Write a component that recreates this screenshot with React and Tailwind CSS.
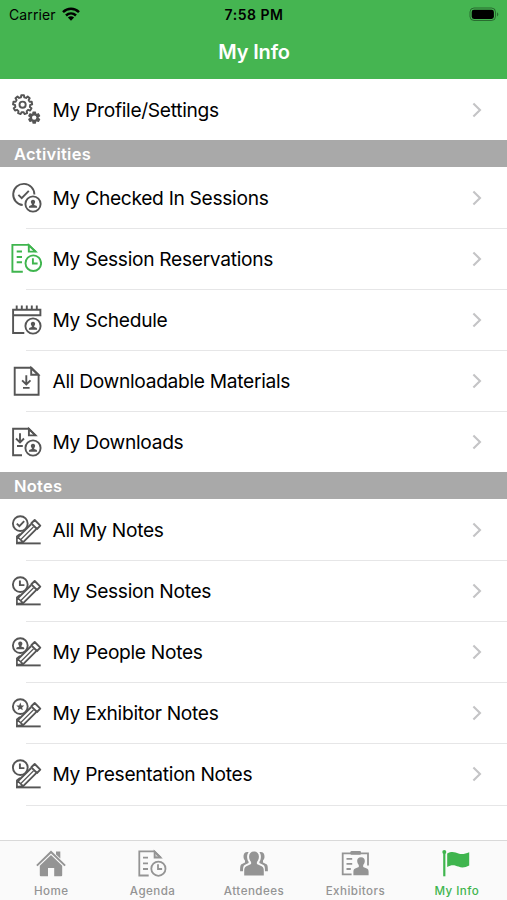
import React from "react";

const gearPath = (cx, cy, outer, inner, teeth) => {
  const pts = [];
  const step = (Math.PI * 2) / teeth;
  for (let i = 0; i < teeth; i++) {
    const a = i * step - Math.PI / 2;
    [[-0.31, inner], [-0.2, outer], [0.2, outer], [0.31, inner]].forEach(([f, r]) => {
      pts.push(`${(cx + r * Math.cos(a + f * step)).toFixed(2)} ${(cy + r * Math.sin(a + f * step)).toFixed(2)}`);
    });
  }
  return `M${pts.join("L")}Z`;
};

function Icon({ children, green }) {
  return (
    <svg
      viewBox="0 0 32 32"
      fill="none"
      stroke="currentColor"
      strokeWidth="1.9"
      className={`h-8 w-8 shrink-0 ${green ? "text-[#3fb54e]" : "text-[#555]"}`}
    >
      {children}
    </svg>
  );
}

function Bust({ x, y, s = 1 }) {
  return (
    <path
      transform={`translate(${x} ${y}) scale(${s})`}
      d="M0-4.4C1.5-4.4 2.3-3.4 2.2-2C2.1-1 1.6-.3 1.2.1V1.1L3.4 1.7C4 2 4.2 2.5 4.2 3.8H-4.2C-4.2 2.5-4 2-3.4 1.7L-1.2 1.1V.1C-1.6-.3-2.1-1-2.2-2C-2.3-3.4-1.5-4.4 0-4.4Z"
      fill="currentColor"
      stroke="none"
    />
  );
}

function PersonBadge({ y = 22 }) {
  return (
    <>
      <circle cx="23" cy={y} r="7.6" />
      <Bust x={23} y={y} s={0.98} />
    </>
  );
}

function Gears() {
  return (
    <Icon>
      <path d={gearPath(12.6, 10.7, 9.6, 7.6, 9)} strokeWidth="1.9" strokeLinejoin="round" />
      <circle cx="12.6" cy="10.7" r="3.1" strokeWidth="1.9" />
      <path d={gearPath(24.2, 23.6, 5.6, 3.9, 6)} strokeWidth="1.4" strokeLinejoin="round" fill="currentColor" />
      <circle cx="24.2" cy="23.6" r="2.2" fill="white" stroke="none" />
    </Icon>
  );
}

function CheckedIn() {
  return (
    <Icon>
      <path d="M12.7 23A10.6 10.6 0 1 1 24.4 12.5" />
      <path d="M8.4 12.8L11.7 16.2L18.8 8.8" />
      <PersonBadge />
    </Icon>
  );
}

function Reservations() {
  return (
    <Icon green>
      <path d="M12.8 28.7H2.4V1.9H18.6L25.8 8.9" />
      <path d="M18.8 2.2V8.6H25.6Z" />
      <path d="M6.7 8.5H12M6.7 14H12M6.7 19.3H12" />
      <circle cx="23.3" cy="20.2" r="7.8" />
      <path d="M22.9 15.2V20.5H27.6" />
    </Icon>
  );
}

function Schedule() {
  return (
    <Icon>
      <path d="M14.3 29H3.1V5.7H30.4V11.2H3.1" />
      <path d="M6.7 1.6V5.5M11.8 1.6V5.5M16.8 1.6V5.5M21.8 1.6V5.5M26.8 1.6V5.5" />
      <PersonBadge />
    </Icon>
  );
}

function Materials() {
  return (
    <Icon>
      <path d="M4.7 2.7H21.3L28.6 9.9V29.7H4.7Z" />
      <path d="M21.2 3V9.8H28.2Z" />
      <path d="M16.3 10.2V19M12.1 15.4L16.3 19.4L20.5 15.4M13 22.9H19.6" />
    </Icon>
  );
}

function Downloads() {
  return (
    <Icon>
      <path d="M12 29.3H3.1V2.7H18.8L25.7 9.6" />
      <path d="M18.9 3V9.4H25.5Z" />
      <path d="M10 7.2V16M6 12.5L10 16.4L14 12.5M7 20H12.8" />
      <PersonBadge />
    </Icon>
  );
}

function NoteIcon({ kind }) {
  return (
    <Icon>
      <circle cx="10.3" cy="9.6" r="7.4" />
      {kind === "check" && <path d="M6.8 9.6L9.4 12.2L14.2 7.2" />}
      {kind === "clock" && <path d="M9.9 5.4V10.1H14.4" />}
      {kind === "person" && <Bust x={10.3} y={9.6} s={0.96} />}
      {kind === "star" && (
        <path
          d="M10.3 5.6L11.4 8.4L14.3 8.6L12.1 10.5L12.8 13.3L10.3 11.8L7.8 13.3L8.5 10.5L6.3 8.6L9.2 8.4Z"
          fill="currentColor"
          stroke="none"
        />
      )}
      <path d="M24.7 6L30.3 11.7L27 15L21.3 9.3Z" strokeLinejoin="round" />
      <path d="M21 10.2L7.8 23.2M26.2 15.2L13.2 28.2" />
      <path d="M23.6 12.8L10.6 25.7" strokeWidth="1.2" />
      <path d="M10 19.8L6.9 22.3V28.8L13.2 28.2L7.6 23" strokeWidth="1.7" strokeLinejoin="round" />
      <path d="M6 29.4H30.7" />
    </Icon>
  );
}

function Row({ icon, label, last }) {
  return (
    <div className="relative flex h-[61.05px] shrink-0 items-center pl-[10px] pr-[25px]">
      {icon}
      <span className="ml-[10.5px] flex-1 whitespace-nowrap text-[19.2px] leading-6 tracking-[-0.31px] text-black">{label}</span>
      <svg viewBox="0 0 10 16" className="h-4 w-[10px]" fill="none" stroke="#c4c4c6" strokeWidth="2.1">
        <path d="M1.4 1.4L8 8L1.4 14.6" />
      </svg>
      {!last && <div className="absolute -bottom-px left-[26px] right-0 h-px bg-[#e6e6e7]" />}
    </div>
  );
}

function Section({ title }) {
  return (
    <div className="flex h-[27px] shrink-0 items-center bg-[#a9a9a9] pl-[14px] pt-px font-semibold text-white">
      <span className="text-[16.5px] tracking-[0.25px]">{title}</span>
    </div>
  );
}

function Tab({ label, active, children }) {
  return (
    <div className={`flex flex-1 flex-col items-center ${active ? "text-[#3fb54e]" : "text-[#949494]"}`}>
      <svg viewBox="0 0 32 30" className="mt-[8px] h-[30px] w-8" fill="none" stroke="currentColor" strokeWidth="1.8">
        {children}
      </svg>
      <span className="mt-[5px] whitespace-nowrap pl-px text-[11.6px] font-medium leading-[15px] tracking-[0.45px]">{label}</span>
    </div>
  );
}

export default function App() {
  return (
    <div className="flex h-[900px] w-[507px] flex-col overflow-hidden bg-white font-['Inter','Liberation_Sans',sans-serif]">
      <header className="flex h-[79px] shrink-0 flex-col bg-[#45b551] text-black">
        <div className="grid h-7 grid-cols-3 items-center pl-[9px] pr-[8px] text-[14px]">
          <div className="flex items-center gap-[6px]">
            <span className="tracking-[0.1px]">Carrier</span>
            <svg viewBox="0 0 18 14" className="h-[14px] w-[18px]" fill="none" stroke="black" strokeWidth="2.5">
              <path d="M1 5.1C5.6.6 12.4.6 17 5.1" />
              <path d="M4 8.5C6.9 5.7 11.1 5.7 14 8.5" />
              <path d="M9 13.8L5.9 10.6C7.7 8.9 10.3 8.9 12.1 10.6Z" fill="black" stroke="none" />
            </svg>
          </div>
          <span className="text-center text-[14px] font-semibold tracking-[0.5px]">7:58 PM</span>
          <svg viewBox="0 0 30 15" className="h-[15px] w-[30px] justify-self-end" fill="none">
            <rect x="1" y="1" width="25.5" height="12.5" rx="4" stroke="#000" strokeOpacity=".4" />
            <rect x="2.7" y="2.7" width="22.2" height="9.2" rx="2.3" fill="black" />
            <path d="M28 5.2C29.8 6 29.8 8.6 28 9.4Z" fill="black" fillOpacity=".4" />
          </svg>
        </div>
        <h1 className="mt-[12px] pl-px text-center text-[20px] font-semibold leading-6 tracking-[-0.15px] text-white">My Info</h1>
      </header>

      <main className="flex flex-1 flex-col">
        <Row icon={<Gears />} label="My Profile/Settings" last />
        <Section title="Activities" />
        <Row icon={<CheckedIn />} label="My Checked In Sessions" />
        <Row icon={<Reservations />} label="My Session Reservations" />
        <Row icon={<Schedule />} label="My Schedule" />
        <Row icon={<Materials />} label="All Downloadable Materials" />
        <Row icon={<Downloads />} label="My Downloads" last />
        <Section title="Notes" />
        <Row icon={<NoteIcon kind="check" />} label="All My Notes" />
        <Row icon={<NoteIcon kind="clock" />} label="My Session Notes" />
        <Row icon={<NoteIcon kind="person" />} label="My People Notes" />
        <Row icon={<NoteIcon kind="star" />} label="My Exhibitor Notes" />
        <Row icon={<NoteIcon kind="clock" />} label="My Presentation Notes" />
      </main>

      <nav className="flex h-[60px] shrink-0 border-t border-[#d9d9d9] bg-[#fafafa]">
        <Tab label="Home">
          <path d="M1.9 16.6L16 3L30.1 16.6" strokeWidth="2" />
          <path d="M21 2.5H25.3V9.5L21 5.4Z" fill="currentColor" stroke="none" />
          <path d="M16 6L27.2 16.7V26.3Q27.2 27.3 26.2 27.3H19.2V19H13V27.3H5.8Q4.8 27.3 4.8 26.3V16.7Z" fill="currentColor" stroke="none" />
        </Tab>
        <Tab label="Agenda">
          <path d="M12.7 26.5H3.3V2.3H18.4L24.8 8.7" />
          <path d="M18.6 2.6V8.5H24.6Z" fill="currentColor" fillOpacity=".4" />
          <path d="M7 8.7H12M7 14.4H12M7 20H12" />
          <circle cx="22.4" cy="19.7" r="7.1" />
          <path d="M22 15.3V20H26.1" />
        </Tab>
        <Tab label="Attendees">
          <g fill="currentColor" stroke="none">
            <path d="M10.6 3.2C7.2 2.6 5.2 4.7 5.5 8C5.6 9.5 6.2 10.7 7 11.5V13.4L3.5 15.3C2.4 16 2.1 17.5 2.1 22.3H5C5 18.6 5.3 17 6.6 16.1L10.6 14V12.8C8.6 9.8 8.6 5.5 10.6 3.2Z" />
            <path d="M21.4 3.2C24.8 2.6 26.8 4.7 26.5 8C26.4 9.5 25.8 10.7 25 11.5V13.4L28.5 15.3C29.6 16 29.9 17.5 29.9 22.3H27C27 18.6 26.7 17 25.4 16.1L21.4 14V12.8C23.4 9.8 23.4 5.5 21.4 3.2Z" />
            <path d="M16 2.5C19.3 2.5 21.1 4.7 20.9 8.1C20.8 10.2 20 11.9 18.9 12.9V14.9L23.7 17.2C25.3 18 25.8 19.2 25.8 22V26.6H6.2V22C6.2 19.2 6.7 18 8.3 17.2L13.1 14.9V12.9C12 11.9 11.2 10.2 11.1 8.1C10.9 4.7 12.7 2.5 16 2.5Z" />
          </g>
        </Tab>
        <Tab label="Exhibitors">
          <path d="M12.6 25.4H3.7V4.3H29V16.5" />
          <rect x="11.4" y="2" width="10.6" height="3.7" rx="1.2" fill="currentColor" stroke="none" />
          <path d="M7.5 9.8H13.2M7.5 14.9H13.2M7.5 20H11.8" />
          <path
            d="M22 8.2C24.8 8.2 26 10 25.8 12.3C25.6 14.2 25 15.1 24.2 16V18.1L27.8 19.4C29.2 20 29.6 21 29.6 23V26.3H14.4V23C14.4 21 14.8 20 16.2 19.4L19.8 18.1V16C19 15.1 18.4 14.2 18.2 12.3C18 10 19.2 8.2 22 8.2Z"
            fill="currentColor"
            stroke="none"
          />
        </Tab>
        <Tab label="My Info" active>
          <circle cx="4.3" cy="3" r="2" fill="currentColor" stroke="none" />
          <path d="M4.3 3V27.3" strokeWidth="2.2" />
          <path d="M7.2 4.6C11.8 1.8 15.3 3.3 18.4 4.5C22 5.8 25.3 4.8 29.2 3.3V16.6C25.4 18.5 22 19.2 18.4 17.6C15.3 16.3 11.8 15 7.2 18Z" fill="currentColor" stroke="none" />
        </Tab>
      </nav>
    </div>
  );
}
